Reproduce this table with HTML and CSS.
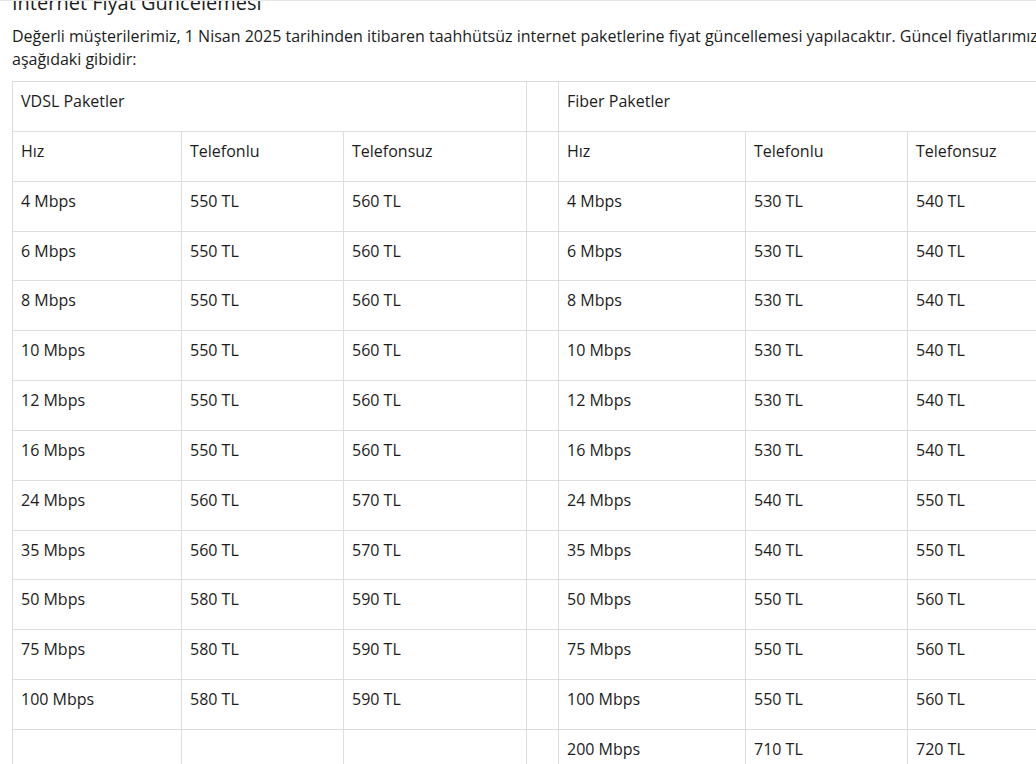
FILE: index.html
```html
<!DOCTYPE html>
<html lang="tr">
<head>
<meta charset="utf-8">
<title>Internet Fiyat Güncelemesi</title>
<link rel="stylesheet" href="styles.css">
</head>
<body>
<div class="page">
  <h2 class="title">Internet Fiyat Güncelemesi</h2>
  <p class="intro">Değerli müşterilerimiz, 1 Nisan 2025 tarihinden itibaren taahhütsüz internet paketlerine fiyat güncellemesi yapılacaktır. Güncel fiyatlarımız aşağıdaki gibidir:</p>
  <table class="prices">
    <colgroup>
      <col class="c1"><col class="c2"><col class="c3"><col class="gap"><col class="c4"><col class="c5"><col class="c6">
    </colgroup>
    <tbody>
      <tr><td colspan="3">VDSL Paketler</td><td></td><td colspan="3">Fiber Paketler</td></tr>
      <tr><td>Hız</td><td>Telefonlu</td><td>Telefonsuz</td><td></td><td>Hız</td><td>Telefonlu</td><td>Telefonsuz</td></tr>
      <tr><td>4 Mbps</td><td>550 TL</td><td>560 TL</td><td></td><td>4 Mbps</td><td>530 TL</td><td>540 TL</td></tr>
      <tr><td>6 Mbps</td><td>550 TL</td><td>560 TL</td><td></td><td>6 Mbps</td><td>530 TL</td><td>540 TL</td></tr>
      <tr><td>8 Mbps</td><td>550 TL</td><td>560 TL</td><td></td><td>8 Mbps</td><td>530 TL</td><td>540 TL</td></tr>
      <tr><td>10 Mbps</td><td>550 TL</td><td>560 TL</td><td></td><td>10 Mbps</td><td>530 TL</td><td>540 TL</td></tr>
      <tr><td>12 Mbps</td><td>550 TL</td><td>560 TL</td><td></td><td>12 Mbps</td><td>530 TL</td><td>540 TL</td></tr>
      <tr><td>16 Mbps</td><td>550 TL</td><td>560 TL</td><td></td><td>16 Mbps</td><td>530 TL</td><td>540 TL</td></tr>
      <tr><td>24 Mbps</td><td>560 TL</td><td>570 TL</td><td></td><td>24 Mbps</td><td>540 TL</td><td>550 TL</td></tr>
      <tr><td>35 Mbps</td><td>560 TL</td><td>570 TL</td><td></td><td>35 Mbps</td><td>540 TL</td><td>550 TL</td></tr>
      <tr><td>50 Mbps</td><td>580 TL</td><td>590 TL</td><td></td><td>50 Mbps</td><td>550 TL</td><td>560 TL</td></tr>
      <tr><td>75 Mbps</td><td>580 TL</td><td>590 TL</td><td></td><td>75 Mbps</td><td>550 TL</td><td>560 TL</td></tr>
      <tr><td>100 Mbps</td><td>580 TL</td><td>590 TL</td><td></td><td>100 Mbps</td><td>550 TL</td><td>560 TL</td></tr>
      <tr><td></td><td></td><td></td><td></td><td>200 Mbps</td><td>710 TL</td><td>720 TL</td></tr>
    </tbody>
  </table>
</div>
</body>
</html>
```
FILE: styles.css
```css
html, body {
  margin: 0;
  padding: 0;
  background: #ffffff;
  overflow: hidden;
}
body {
  font-family: "Open Sans", "Noto Sans", sans-serif;
  color: #1c1c1c;
  border-top: 1px solid #e6e6e6;
}
.page {
  width: 1080px;
  padding-left: 12px;
}
.title {
  margin: -10px 0 0 0;
  font-size: 20px;
  line-height: 24px;
  font-weight: 400;
}
.intro {
  margin: 10px 0 10px 0;
  font-size: 16px;
  line-height: 23px;
}
.prices {
  border-collapse: collapse;
  table-layout: fixed;
  width: 1060px;
  font-size: 16px;
}
.prices td {
  border: 1px solid #dddddd;
  padding: 7px 8px 17.85px 8px;
  line-height: 24px;
  height: 24px;
  vertical-align: top;
  white-space: nowrap;
}
.c1 { width: 169px; }
.c2 { width: 162px; }
.c3 { width: 183px; }
.gap { width: 32px; }
.c4 { width: 187px; }
.c5 { width: 162px; }
.c6 { width: 165px; }
```
